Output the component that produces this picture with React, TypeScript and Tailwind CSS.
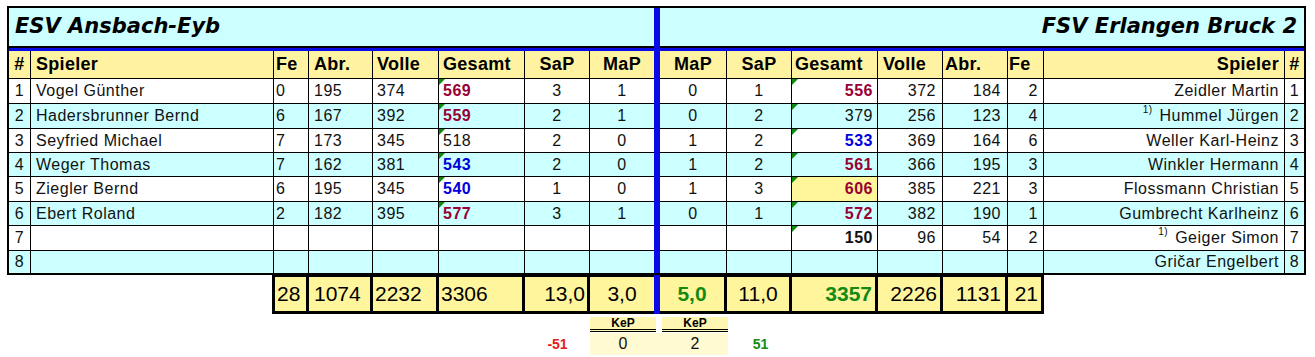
import React from 'react';
import clsx from 'clsx';

type Kind = 'red' | 'blue' | 'plain' | 'bold';

interface LeftRow {
  name: string;
  fe: string;
  abr: string;
  volle: string;
  ges: string;
  kind: Kind;
  sap: string;
  map: string;
}

interface RightRow {
  map: string;
  sap: string;
  ges: string;
  kind: Kind;
  volle: string;
  abr: string;
  fe: string;
  name: string;
  note?: boolean;
  hl?: boolean;
}

const kindClass: Record<Kind, string> = {
  red: 'font-bold text-[#990033]',
  blue: 'font-bold text-[#0000dd]',
  plain: '',
  bold: 'font-bold',
};

const leftRows: LeftRow[] = [
  { name: 'Vogel Günther', fe: '0', abr: '195', volle: '374', ges: '569', kind: 'red', sap: '3', map: '1' },
  { name: 'Hadersbrunner Bernd', fe: '6', abr: '167', volle: '392', ges: '559', kind: 'red', sap: '2', map: '1' },
  { name: 'Seyfried Michael', fe: '7', abr: '173', volle: '345', ges: '518', kind: 'plain', sap: '2', map: '0' },
  { name: 'Weger Thomas', fe: '7', abr: '162', volle: '381', ges: '543', kind: 'blue', sap: '2', map: '0' },
  { name: 'Ziegler Bernd', fe: '6', abr: '195', volle: '345', ges: '540', kind: 'blue', sap: '1', map: '0' },
  { name: 'Ebert Roland', fe: '2', abr: '182', volle: '395', ges: '577', kind: 'red', sap: '3', map: '1' },
  { name: '', fe: '', abr: '', volle: '', ges: '', kind: 'plain', sap: '', map: '' },
  { name: '', fe: '', abr: '', volle: '', ges: '', kind: 'plain', sap: '', map: '' },
];

const rightRows: RightRow[] = [
  { map: '0', sap: '1', ges: '556', kind: 'red', volle: '372', abr: '184', fe: '2', name: 'Zeidler Martin' },
  { map: '0', sap: '2', ges: '379', kind: 'plain', volle: '256', abr: '123', fe: '4', name: 'Hummel Jürgen', note: true },
  { map: '1', sap: '2', ges: '533', kind: 'blue', volle: '369', abr: '164', fe: '6', name: 'Weller Karl-Heinz' },
  { map: '1', sap: '2', ges: '561', kind: 'red', volle: '366', abr: '195', fe: '3', name: 'Winkler Hermann' },
  { map: '1', sap: '3', ges: '606', kind: 'red', volle: '385', abr: '221', fe: '3', name: 'Flossmann Christian', hl: true },
  { map: '0', sap: '1', ges: '572', kind: 'red', volle: '382', abr: '190', fe: '1', name: 'Gumbrecht Karlheinz' },
  { map: '', sap: '', ges: '150', kind: 'bold', volle: '96', abr: '54', fe: '2', name: 'Geiger Simon', note: true },
  { map: '', sap: '', ges: '', kind: 'plain', volle: '', abr: '', fe: '', name: 'Gričar Engelbert' },
];

const rowH = ['h-[25px]', 'h-[25px]', 'h-[24px]', 'h-[24px]', 'h-[25px]', 'h-[24px]', 'h-[25px]', 'h-[22px]'];

// column widths, shared by header, rows and totals
const L = {
  num: 'w-[22px] justify-center',
  name: 'w-[243px] justify-start pl-[5px]',
  fe: 'w-[35px] justify-start pl-[2px]',
  abr: 'w-[64px] justify-start pl-[5px]',
  volle: 'w-[66px] justify-start pl-[4px]',
  ges: 'w-[86px] justify-start pl-[4px]',
  sap: 'w-[65px] justify-center',
  map: 'w-[64px] justify-center',
};

const R = {
  map: 'w-[67px] justify-center',
  sap: 'w-[65px] justify-center',
  ges: 'w-[86px] justify-end pr-[4px]',
  volle: 'w-[65px] justify-end pr-[6px]',
  abr: 'w-[65px] justify-end pr-[6px]',
  fe: 'w-[36px] justify-end pr-[5px]',
  name: 'w-[241px] justify-end pr-[5px]',
  num: 'w-[19px] justify-center',
};

function Cell({
  cls,
  last,
  noR,
  children,
}: {
  cls: string;
  last?: boolean;
  noR?: boolean;
  children?: React.ReactNode;
}) {
  return (
    <div
      className={clsx(
        'relative flex items-center h-full shrink-0 border-black whitespace-nowrap',
        !noR && 'border-r',
        !last && 'border-b',
        cls
      )}
    >
      {children}
    </div>
  );
}

function Bar() {
  return <div className="w-[6px] h-full shrink-0 bg-[#0a0ae6]" />;
}

function Marker() {
  return (
    <span className="absolute left-0 top-0 w-0 h-0 border-t-[6px] border-t-[#0b8a0b] border-r-[6px] border-r-transparent" />
  );
}

function TotalBox({ cls, first, noR, children }: { cls: string; first?: boolean; noR?: boolean; children?: React.ReactNode }) {
  return (
    <div
      className={clsx(
        'flex items-center h-full shrink-0 border-black border-t-2 border-b-[3px]',
        first && 'border-l-[3px]',
        !noR && 'border-r-[3px]',
        cls
      )}
    >
      {children}
    </div>
  );
}

export default function App() {
  return (
    <div
      className="bg-white w-[1315px] h-[357px] pl-[7px] pt-[6px] text-[#111]"
      style={{ fontFamily: '"Liberation Sans", Arial, sans-serif' }}
    >
      <div className="w-[1299px] border-2 border-black bg-[#ccffff]">
        {/* title */}
        <div className="flex h-[40px]">
          <div className="w-[645px] h-full flex items-center pl-[6px] border-b-2 border-black">
            <span
              className="text-[21px] font-bold italic text-black"
              style={{ fontFamily: '"DejaVu Sans", sans-serif' }}
            >
              ESV Ansbach-Eyb
            </span>
          </div>
          <Bar />
          <div className="w-[644px] h-full flex items-center justify-end pr-[7px] border-b-2 border-black">
            <span
              className="text-[21px] font-bold italic text-black"
              style={{ fontFamily: '"DejaVu Sans", sans-serif' }}
            >
              FSV Erlangen Bruck 2
            </span>
          </div>
        </div>
        <div className="h-[3px] bg-[#0a0ae6]" />

        {/* header */}
        <div className="flex h-[28px] bg-[#fff3a2] text-[18px] font-bold tracking-[0.3px] text-black">
          <Cell cls={L.num}>#</Cell>
          <Cell cls={L.name}>Spieler</Cell>
          <Cell cls={L.fe}>Fe</Cell>
          <Cell cls={L.abr}>Abr.</Cell>
          <Cell cls={L.volle}>Volle</Cell>
          <Cell cls={L.ges}>Gesamt</Cell>
          <Cell cls={L.sap}>SaP</Cell>
          <Cell cls={L.map} noR>MaP</Cell>
          <Bar />
          <Cell cls={R.map}>MaP</Cell>
          <Cell cls={R.sap}>SaP</Cell>
          <Cell cls="w-[86px] justify-start pl-[3px]">Gesamt</Cell>
          <Cell cls="w-[65px] justify-start pl-[5px]">Volle</Cell>
          <Cell cls="w-[65px] justify-start pl-[2px]">Abr.</Cell>
          <Cell cls="w-[36px] justify-start pl-[1px]">Fe</Cell>
          <Cell cls={R.name}>Spieler</Cell>
          <Cell cls={R.num} noR>#</Cell>
        </div>

        {/* rows */}
        {leftRows.map((l, i) => {
          const r = rightRows[i];
          const last = i === leftRows.length - 1;
          return (
            <div
              key={i}
              className={clsx('flex text-[16px] tracking-[0.5px]', rowH[i], i % 2 ? 'bg-[#ccffff]' : 'bg-white')}
            >
              <Cell cls={L.num} last={last}>{i + 1}</Cell>
              <Cell cls={L.name} last={last}>{l.name}</Cell>
              <Cell cls={L.fe} last={last}>{l.fe}</Cell>
              <Cell cls={L.abr} last={last}>{l.abr}</Cell>
              <Cell cls={L.volle} last={last}>{l.volle}</Cell>
              <Cell cls={clsx(L.ges, kindClass[l.kind])} last={last}>
                {l.ges && <Marker />}
                {l.ges}
              </Cell>
              <Cell cls={L.sap} last={last}>{l.sap}</Cell>
              <Cell cls={L.map} last={last} noR>{l.map}</Cell>
              <Bar />
              <Cell cls={R.map} last={last}>{r.map}</Cell>
              <Cell cls={R.sap} last={last}>{r.sap}</Cell>
              <Cell cls={clsx(R.ges, kindClass[r.kind], r.hl && 'bg-[#fff59a]')} last={last}>
                {r.ges && <Marker />}
                {r.ges}
              </Cell>
              <Cell cls={R.volle} last={last}>{r.volle}</Cell>
              <Cell cls={R.abr} last={last}>{r.abr}</Cell>
              <Cell cls={R.fe} last={last}>{r.fe}</Cell>
              <Cell cls={R.name} last={last}>
                {r.note && <sup className="text-[10px] mr-[7px] -top-[6px]">1)</sup>}
                {r.name}
              </Cell>
              <Cell cls={R.num} last={last} noR>{i + 1}</Cell>
            </div>
          );
        })}
      </div>

      {/* totals */}
      <div className="flex h-[39px] ml-[265px] bg-[#fff59d] w-fit text-[21px] text-black">
        <TotalBox cls="w-[37px] pl-[2px]" first>28</TotalBox>
        <TotalBox cls="w-[64px] pl-[5px]">1074</TotalBox>
        <TotalBox cls="w-[66px] pl-[2px]">2232</TotalBox>
        <TotalBox cls="w-[86px] pl-[2px]">3306</TotalBox>
        <TotalBox cls="w-[65px] justify-end pr-[2px]">13,0</TotalBox>
        <TotalBox cls="w-[64px] justify-center" noR>3,0</TotalBox>
        <Bar />
        <TotalBox cls="w-[67px] justify-center font-bold text-[#138a13]">5,0</TotalBox>
        <TotalBox cls="w-[65px] justify-center">11,0</TotalBox>
        <TotalBox cls="w-[86px] justify-end pr-[3px] font-bold text-[#138a13]">3357</TotalBox>
        <TotalBox cls="w-[65px] justify-end pr-[3px]">2226</TotalBox>
        <TotalBox cls="w-[65px] justify-end pr-[4px]">1131</TotalBox>
        <TotalBox cls="w-[36px] justify-end pr-[3px]">21</TotalBox>
      </div>

      {/* KeP */}
      <div className="flex ml-[583px] mt-[3px] gap-[6px] text-[12px] font-bold text-black">
        <div className="w-[66px] h-[15px] flex items-center justify-center bg-[#fff6b4] border-b-[3px] border-double border-black">
          KeP
        </div>
        <div className="w-[66px] h-[15px] flex items-center justify-center bg-[#fff6b4] border-b-[3px] border-double border-black">
          KeP
        </div>
      </div>
      <div className="flex ml-[518px] mt-[1px] h-[22px] text-[16px]">
        <div className="w-[65px] flex items-center justify-center text-[14px] font-bold text-[#e21b1b]">-51</div>
        <div className="flex gap-[6px] bg-[#fffad2]">
          <div className="w-[66px] flex items-center justify-center">0</div>
          <div className="w-[66px] flex items-center justify-center">2</div>
        </div>
        <div className="w-[65px] flex items-center justify-center text-[14px] font-bold text-[#138a13]">51</div>
      </div>
    </div>
  );
}
